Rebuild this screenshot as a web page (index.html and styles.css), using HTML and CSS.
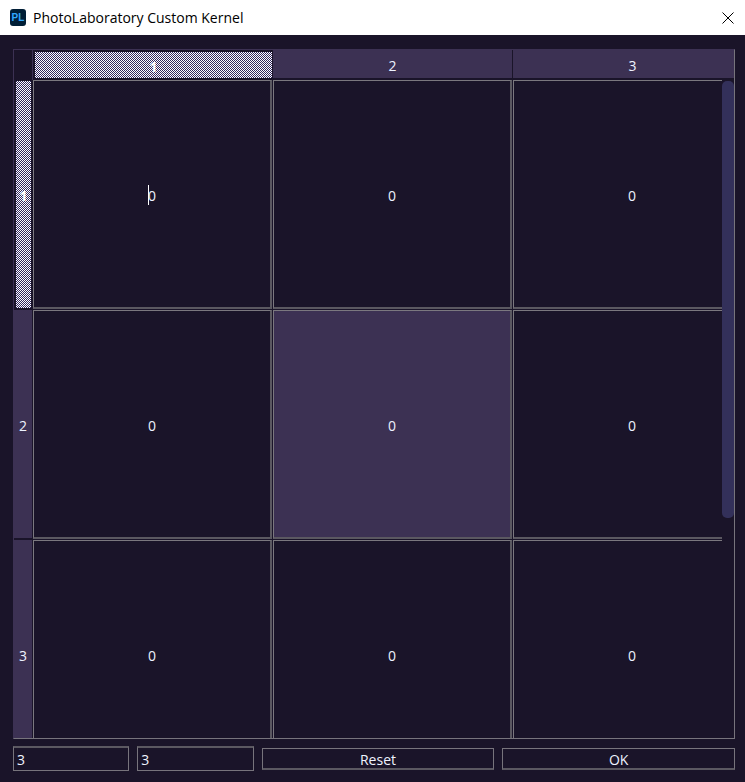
FILE: index.html
```html
<!DOCTYPE html>
<html lang="en">
  <head>
    <meta charset="UTF-8">
    <title>PhotoLaboratory Custom Kernel</title>
    <link rel="stylesheet" href="styles.css">
  </head>
  <body>
    <header class="title-bar">
      <span class="app-icon">PL</span>
      <span class="title-text">PhotoLaboratory Custom Kernel</span>
      <svg class="close-icon" width="12" height="12" viewBox="0 0 12 12">
        <path d="M0.5 0.5L11.5 11.5M11.5 0.5L0.5 11.5" stroke="#000" stroke-width="1" fill="none"/>
      </svg>
    </header>
    <main class="content">
      <div class="kernel-table">
        <div class="corner"></div>
        <div class="col-head selected"><span>1</span></div>
        <div class="col-head"><span>2</span></div>
        <div class="col-head"><span>3</span></div>

        <div class="row-head selected"><span>1</span></div>
        <div class="cell"><i class="caret"></i>0</div>
        <div class="cell">0</div>
        <div class="cell">0</div>

        <div class="row-head"><span>2</span></div>
        <div class="cell">0</div>
        <div class="cell current">0</div>
        <div class="cell">0</div>

        <div class="row-head"><span>3</span></div>
        <div class="cell">0</div>
        <div class="cell">0</div>
        <div class="cell">0</div>

        <div class="scrollbar"><div class="scroll-thumb"></div></div>
      </div>
      <div class="controls">
        <input class="size-input" type="text" value="3">
        <input class="size-input" type="text" value="3">
        <button class="btn">Reset</button>
        <button class="btn">OK</button>
      </div>
    </main>
  </body>
</html>
```

FILE: styles.css
```css
* {
  box-sizing: border-box;
}
html, body {
  margin: 0;
  height: 100%;
}
body {
  display: flex;
  flex-direction: column;
  background-color: #1a1429;
  color: #eef3ff;
  font-family: "Open Sans", sans-serif;
  font-size: 14px;
  overflow: hidden;
}

/* title bar */
.title-bar {
  height: 35px;
  flex-shrink: 0;
  display: flex;
  align-items: center;
  background-color: #fff;
  color: #000;
  padding: 0 11px 0 10px;
}
.app-icon {
  width: 16px;
  height: 17px;
  margin-right: 7px;
  border-radius: 3px;
  background-color: #001e36;
  color: #31a8ff;
  font-family: "Liberation Sans", sans-serif;
  font-size: 10px;
  font-weight: 700;
  line-height: 17px;
  text-align: center;
}
.title-text {
  flex-grow: 1;
  font-size: 14px;
}

/* table */
.content {
  flex-grow: 1;
  min-height: 0;
  display: flex;
  flex-direction: column;
  gap: 7px;
  padding: 14px 10px 11px 13px;
}
.kernel-table {
  position: relative;
  flex-grow: 1;
  min-height: 0;
  overflow: hidden;
  display: grid;
  grid-template-columns: 19px repeat(3, 240px);
  grid-template-rows: 30px repeat(3, 230px);
  border: 1px solid #77747c;
  border-top-color: #3c3153;
  border-left-color: #3c3153;
}
.corner {
  border-right: 1px solid #3c3153;
}
.col-head, .row-head {
  display: flex;
  align-items: center;
  justify-content: center;
  background-color: #3c3153;
  border-right: 1px solid #1a1429;
  border-bottom: 2px solid #1a1429;
}
.col-head span, .row-head span {
  padding-top: 2px;
}
.col-head.selected {
  padding: 2px 0 0 2px;
}
.row-head.selected {
  padding: 1px 1px 0 2px;
}
/* 1px checker: stripes xor'd together, then the dark squares tinted */
.col-head.selected, .row-head.selected {
  color: #fff;
  font-weight: 700;
  background-color: transparent;
  background-image:
    linear-gradient(#32285f, #32285f),
    repeating-linear-gradient(0deg, #fff 0 1px, #000 1px 2px),
    repeating-linear-gradient(90deg, #fff 0 1px, #000 1px 2px);
  background-blend-mode: lighten, difference, normal;
  background-origin: content-box;
  background-clip: content-box;
}
.cell {
  display: flex;
  align-items: center;
  justify-content: center;
  margin: 0 1px 1px 0;
  padding-top: 2px;
  border-left: 1px solid #7b787f;
  border-top: 1px solid #7b787f;
  border-right: 2px solid #5b5861;
  border-bottom: 2px solid #5b5861;
}
.cell.current {
  background-color: #3c3153;
}
.caret {
  display: inline-block;
  width: 1px;
  height: 20px;
  margin-right: -1px;
  background-color: #fff;
}

/* scrollbar */
.scrollbar {
  position: absolute;
  top: 30px;
  right: 0;
  bottom: 0;
  width: 12px;
  background-color: #1a1429;
  padding-top: 1px;
}
.scroll-thumb {
  height: 437px;
  border-radius: 5px;
  background-color: #33305a;
}

/* bottom controls */
.controls {
  flex-shrink: 0;
  height: 25px;
  display: grid;
  grid-template-columns: 1fr 1fr 2fr 2fr;
  gap: 8px;
  align-items: center;
}
.size-input {
  height: 25px;
  width: 100%;
  padding: 0 3px;
  background-color: #1a1429;
  color: #eef3ff;
  font-family: inherit;
  font-size: 14px;
  border: 1px solid #77747c;
  border-top: 2px solid #5b5861;
  outline: none;
}
.btn {
  height: 22px;
  padding: 1px 0 0;
  background-color: #1a1429;
  color: #eef3ff;
  font-family: inherit;
  font-size: 14px;
  border: 1px solid #77747c;
  border-bottom: 2px solid #5b5861;
}
```
